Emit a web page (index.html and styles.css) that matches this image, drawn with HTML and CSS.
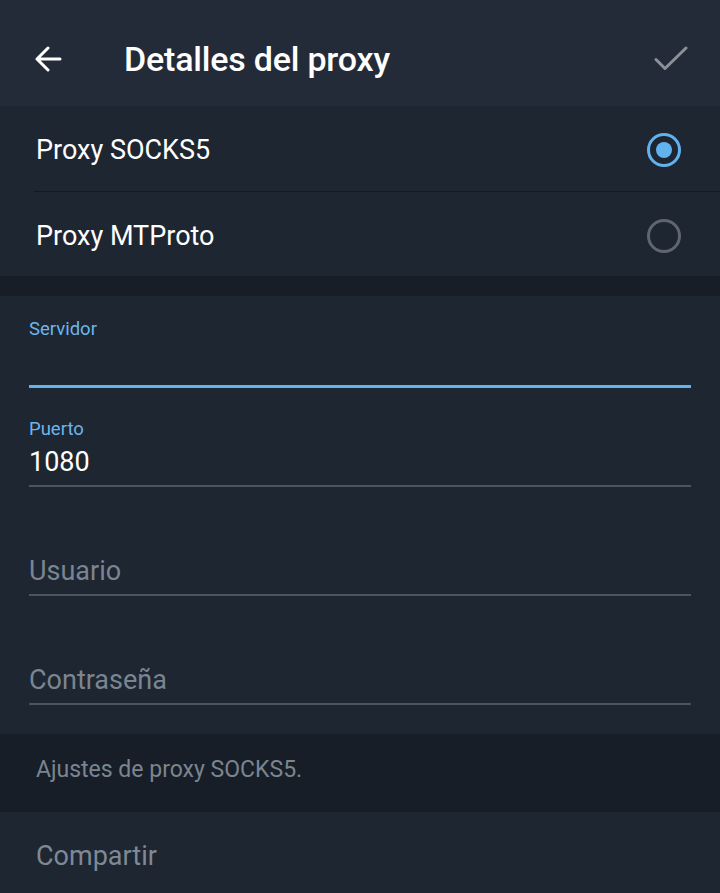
FILE: index.html
```html
<!DOCTYPE html>
<html lang="es">
<head>
<meta charset="utf-8">
<title>Detalles del proxy</title>
<link rel="stylesheet" href="styles.css">
</head>
<body>
<header class="topbar">
  <svg class="icon back" width="28" height="26" viewBox="0 0 28 26"><path d="M26 13H3M14 2L3 13l11 11" fill="none" stroke="#ffffff" stroke-width="3" stroke-linecap="round" stroke-linejoin="round"/></svg>
  <h1 class="title">Detalles del proxy</h1>
  <svg class="icon check" width="34" height="26" viewBox="0 0 34 26"><path d="M2 13.5l9 9L32 2" fill="none" stroke="#8c9199" stroke-width="3" stroke-linecap="round" stroke-linejoin="round"/></svg>
</header>
<section class="types">
  <div class="type-row">
    <span class="type-label">Proxy SOCKS5</span>
    <span class="radio on"></span>
  </div>
  <div class="type-row">
    <span class="type-label">Proxy MTProto</span>
    <span class="radio"></span>
  </div>
</section>
<div class="gap"></div>
<section class="fields">
  <div class="field focused">
    <div class="field-label">Servidor</div>
    <div class="field-value"></div>
  </div>
  <div class="field">
    <div class="field-label">Puerto</div>
    <div class="field-value">1080</div>
  </div>
  <div class="field">
    <div class="field-label"></div>
    <div class="field-value placeholder">Usuario</div>
  </div>
  <div class="field">
    <div class="field-label"></div>
    <div class="field-value placeholder">Contraseña</div>
  </div>
</section>
<div class="info">Ajustes de proxy SOCKS5.</div>
<div class="share">Compartir</div>
</body>
</html>
```
FILE: styles.css
```css
* { box-sizing: border-box; }
html, body { margin: 0; padding: 0; }
body {
  width: 720px;
  height: 893px;
  overflow: hidden;
  background: #1e2632;
  font-family: Roboto, "Noto Sans", sans-serif;
  color: #ffffff;
}
.topbar {
  height: 106px;
  background: #242b38;
  display: flex;
  align-items: center;
  padding: 12px 32px 0 34px;
}
.icon { display: block; flex: none; }
.title {
  margin: 0 0 0 62px;
  font-size: 34px;
  font-weight: 500;
  flex: 1;
  letter-spacing: -0.2px;
}
.types { background: #1e2632; }
.type-row {
  height: 85px;
  display: flex;
  align-items: center;
  justify-content: space-between;
  padding: 3px 39px 0 36px;
  font-size: 27px;
}
.type-row + .type-row {
  border-top: 1px solid #141a22;
  margin-left: 34px;
  padding-left: 2px;
}
.radio {
  width: 34px;
  height: 34px;
  border-radius: 50%;
  border: 3px solid #5f6670;
  display: flex;
  align-items: center;
  justify-content: center;
}
.radio.on { border-color: #62b2ee; }
.radio.on::after {
  content: "";
  width: 16px;
  height: 16px;
  border-radius: 50%;
  background: #62b2ee;
}
.gap { height: 20px; background: #181e28; }
.fields {
  padding: 22px 29px 29px 29px;
  display: flex;
  flex-direction: column;
  gap: 40px;
}
.field {
  border-bottom: 2px solid #4a5563;
  height: 69px;
  display: flex;
  flex-direction: column;
  gap: 7px;
  padding-bottom: 8px;
}
.field.focused {
  border-bottom: 3px solid #62b2ee;
  height: 70px;
  margin-bottom: -10px;
}
.field-label {
  font-size: 18.5px;
  color: #6cb5ec;
  height: 22px;
  line-height: 22px;
}
.field-value {
  font-size: 27px;
  line-height: 30px;
  height: 30px;
  color: #ffffff;
}
.field-value.placeholder { color: #7b8591; }
.info {
  height: 78px;
  background: #181e28;
  display: flex;
  align-items: center;
  padding: 0 0 8px 36px;
  font-size: 23px;
  color: #7b8590;
}
.share {
  height: 81px;
  display: flex;
  align-items: center;
  padding: 6px 0 0 36px;
  font-size: 27px;
  color: #7f8994;
}
```
